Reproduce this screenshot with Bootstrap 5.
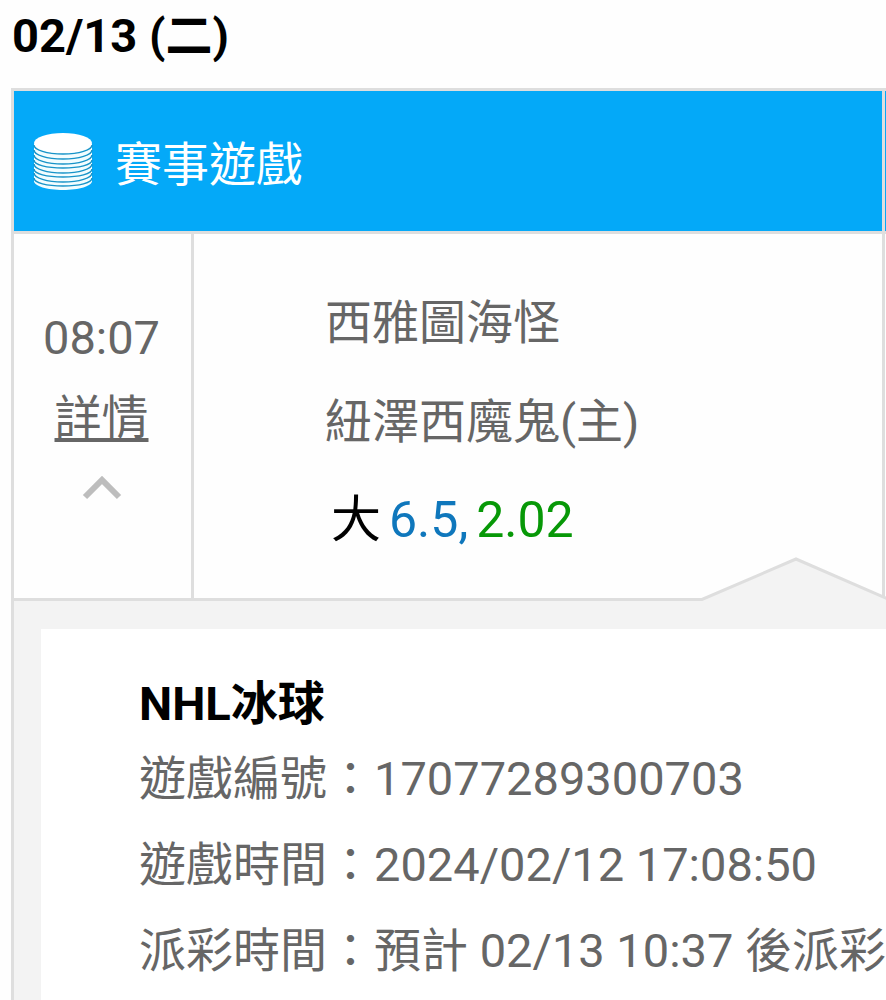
<!DOCTYPE html>
<html lang="zh-Hant">
<head>
<meta charset="utf-8">
<meta name="viewport" content="width=device-width, initial-scale=1">
<title>賽事遊戲</title>
<link rel="stylesheet" href="https://cdn.jsdelivr.net/npm/bootstrap@5.3.0/dist/css/bootstrap.min.css">
<style>
  :root { --line: #dedede; --ink: #666; --blue: #04a9f8; }
  body {
    font-family: Roboto, "Noto Sans CJK TC", sans-serif;
    font-size: 47px;
    line-height: 72px;
    color: var(--ink);
    background: #fefefe;
    overflow-x: hidden;
  }
  .day-title { font-size: 47px; line-height: 72px; padding-left: 12px; margin-bottom: 16px; color: #000; }
  .ticket { margin-left: 11px; border-top: 3px solid var(--line); border-left: 3px solid var(--line); }
  .ticket-grid { display: grid; grid-template-columns: 180px minmax(0, 1fr) 1px; }
  .game-head { grid-column: span 2; height: 143px; padding: 2px 0 0 19px; gap: 22px; background: var(--blue); background-clip: padding-box; color: #fff; }
  .game-head h2 { font-size: 47px; line-height: 72px; padding-top: 6px; }
  .next-head { background: var(--blue); background-clip: padding-box; }
  .edge-b { border-bottom: 3px solid var(--line); }
  .edge-r { border-right: 3px solid var(--line); }
  .time-cell { padding: 68px 2px 77px 0; }
  .time-cell a { color: var(--ink); line-height: 80px; padding-top: 4px; text-decoration-thickness: 4px; text-underline-offset: 4px; text-decoration-skip-ink: none; }
  .fold-btn { line-height: 1; }
  .bet-cell { padding: 39px 0 28px 131px; line-height: 99px; }
  .pick { font-size: 50px; padding-left: 6px; color: #000; gap: 8px; }
  .pick-line { color: #0f77bc; }
  .pick-odds { color: #079807; }
  .notch { right: -7px; bottom: -3px; }
  .detail-wrap { background: #f3f3f3; padding: 28px 0 0 27px; }
  .detail-panel { background: #fff; padding: 43px 0 0 98px; }
  .detail-panel h3 { font-size: 47px; line-height: 64px; color: #000; }
  .detail-panel dl { line-height: 86px; }
</style>
</head>
<body class="min-vh-100 d-flex flex-column">
  <h1 class="day-title fw-bold">02/13 (二)</h1>
  <main class="ticket flex-grow-1 d-flex flex-column">
    <div class="ticket-grid">
      <header class="game-head edge-b edge-r d-flex align-items-center">
        <svg width="60" height="60" viewBox="0 0 60 60" aria-hidden="true">
          <path fill="#f2fdff" d="M1 12V49C1 54 14 58 30 58S59 54 59 49V12Z"/>
          <g fill="none" stroke="#1793c8" stroke-width="1.500">
            <path d="M1 13C1 18 14 22 30 22S59 18 59 13"/>
            <path d="M1 18C1 23 14 27 30 27S59 23 59 18"/>
            <path d="M1 23C1 28 14 32 30 32S59 28 59 23"/>
            <path d="M1 28C1 33 14 36 30 36S59 33 59 28"/>
            <path d="M1 32C1 37 14 41 30 41S59 37 59 32"/>
            <path d="M1 37C1 42 14 45 30 45S59 42 59 37"/>
            <path d="M1 41C1 46 14 50 30 50S59 46 59 41"/>
            <path d="M1 46C1 51 14 54 30 54S59 51 59 46"/>
          </g>
          <ellipse cx="30" cy="11" rx="29" ry="10" fill="#fff"/>
        </svg>
        <h2 class="mb-0 fw-normal">賽事遊戲</h2>
      </header>
      <div class="next-head edge-b"></div>

      <div class="time-cell edge-b edge-r d-flex flex-column align-items-center">
        <time>08:07</time>
        <a href="#detail">詳情</a>
        <button type="button" class="fold-btn btn border-0 p-0 mt-3" aria-label="收合">
          <svg width="40" height="26" viewBox="0 0 40 26" fill="none" stroke="#bdbdbd" stroke-width="6"><path d="M3 23 20 6 37 23"/></svg>
        </button>
      </div>
      <div class="bet-cell edge-b edge-r position-relative text-nowrap">
        <div>西雅圖海怪</div>
        <div>紐澤西魔鬼(主)</div>
        <div class="pick d-flex">
          <span>大</span><span class="pick-line">6.5,</span><span class="pick-odds">2.02</span>
        </div>
        <svg class="notch position-absolute" width="190" height="46" viewBox="0 0 190 46" aria-hidden="true">
          <path fill="#f3f3f3" d="M0 46V44.500L3 44.500 97 4 190 44.500V46Z"/>
          <path fill="none" stroke="#dedede" stroke-width="3" d="M0 44.500H3L97 4 190 44.500"/>
        </svg>
      </div>
      <div class="edge-b"></div>
    </div>

    <section id="detail" class="detail-wrap flex-grow-1 d-flex flex-column">
      <div class="detail-panel flex-grow-1 text-nowrap overflow-hidden">
        <h3 class="mb-0 fw-bold">NHL冰球</h3>
        <dl class="mb-0">
          <div class="d-flex"><dt class="fw-normal">遊戲編號：</dt><dd class="mb-0">17077289300703</dd></div>
          <div class="d-flex"><dt class="fw-normal">遊戲時間：</dt><dd class="mb-0">2024/02/12 17:08:50</dd></div>
          <div class="d-flex"><dt class="fw-normal">派彩時間：</dt><dd class="mb-0">預計 02/13 10:37 後派彩</dd></div>
        </dl>
      </div>
    </section>
  </main>
<script src="https://cdn.jsdelivr.net/npm/bootstrap@5.3.0/dist/js/bootstrap.bundle.min.js"></script>
</body>
</html>
